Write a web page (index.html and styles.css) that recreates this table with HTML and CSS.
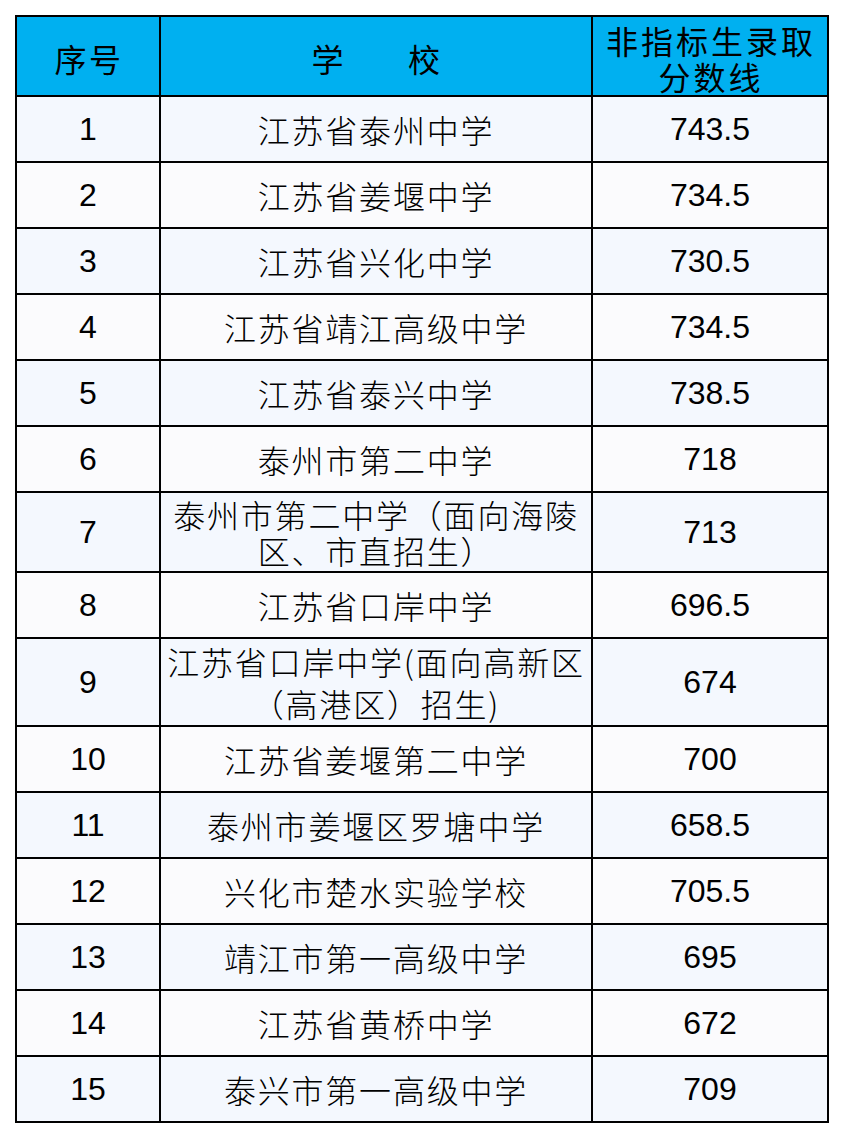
FILE: index.html
```html
<!DOCTYPE html>
<html lang="zh-CN">
<head>
<meta charset="utf-8">
<title>非指标生录取分数线</title>
<link rel="stylesheet" href="styles.css">
</head>
<body>
<table class="score-table">
  <colgroup>
    <col class="c-no">
    <col class="c-school">
    <col class="c-score">
  </colgroup>
  <thead>
    <tr class="head">
      <th class="cn">序号</th>
      <th class="cn">学<span class="gap"></span>校</th>
      <th class="cn two"><span class="ln">非指标生录取</span><span class="ln">分数线</span></th>
    </tr>
  </thead>
  <tbody>
    <tr class="odd"><td class="num">1</td><td class="cn">江苏省泰州中学</td><td class="num">743.5</td></tr>
    <tr class="even"><td class="num">2</td><td class="cn">江苏省姜堰中学</td><td class="num">734.5</td></tr>
    <tr class="odd"><td class="num">3</td><td class="cn">江苏省兴化中学</td><td class="num">730.5</td></tr>
    <tr class="even"><td class="num">4</td><td class="cn">江苏省靖江高级中学</td><td class="num">734.5</td></tr>
    <tr class="odd"><td class="num">5</td><td class="cn">江苏省泰兴中学</td><td class="num">738.5</td></tr>
    <tr class="even"><td class="num">6</td><td class="cn">泰州市第二中学</td><td class="num">718</td></tr>
    <tr class="odd r7"><td class="num">7</td><td class="cn two"><span class="ln">泰州市第二中学（面向海陵</span><span class="ln">区、市直招生）</span></td><td class="num">713</td></tr>
    <tr class="even"><td class="num">8</td><td class="cn">江苏省口岸中学</td><td class="num">696.5</td></tr>
    <tr class="odd r9"><td class="num">9</td><td class="cn two wide"><span class="ln">江苏省口岸中学(面向高新区</span><span class="ln">（高港区）招生)</span></td><td class="num">674</td></tr>
    <tr class="even"><td class="num">10</td><td class="cn">江苏省姜堰第二中学</td><td class="num">700</td></tr>
    <tr class="odd"><td class="num">11</td><td class="cn">泰州市姜堰区罗塘中学</td><td class="num">658.5</td></tr>
    <tr class="even"><td class="num">12</td><td class="cn">兴化市楚水实验学校</td><td class="num">705.5</td></tr>
    <tr class="odd"><td class="num">13</td><td class="cn">靖江市第一高级中学</td><td class="num">695</td></tr>
    <tr class="even"><td class="num">14</td><td class="cn">江苏省黄桥中学</td><td class="num">672</td></tr>
    <tr class="odd"><td class="num">15</td><td class="cn">泰兴市第一高级中学</td><td class="num">709</td></tr>
  </tbody>
</table>
</body>
</html>
```

FILE: styles.css
```css
html, body {
  margin: 0;
  padding: 0;
  background: #ffffff;
}

.score-table {
  margin: 15px 0 0 15px;
  border-collapse: separate;
  border-spacing: 0;
  border-top: 2px solid #000;
  border-left: 2px solid #000;
  table-layout: fixed;
  width: 814px;
}

.c-no { width: 144px; }
.c-school { width: 432px; }
.c-score { width: 236px; }

.score-table th,
.score-table td {
  box-sizing: border-box;
  border-right: 2px solid #000;
  border-bottom: 2px solid #000;
  padding: 0;
  text-align: center;
  vertical-align: middle;
  height: 66px;
  color: #000;
  white-space: nowrap;
}

.head th {
  height: 80px;
  background: #00b0f0;
  padding-top: 4px;
  font-weight: 400;
}

.head th.cn {
  letter-spacing: 2.5px;
  padding-left: 2px;
}

.head th.two {
  letter-spacing: 3px;
}

.gap {
  display: inline-block;
  width: 62px;
}

.odd td { background: #f4f8fe; }
.even td { background: #fbfbfd; }

.r7 td { height: 80px; }
.r9 td { height: 88px; }

.cn {
  font-family: "Noto Sans CJK SC", "Liberation Sans", sans-serif;
  font-size: 32px;
  font-weight: 300;
  letter-spacing: 1.8px;
  padding-left: 2px;
  line-height: 36px;
}

.ln {
  display: block;
  height: 36px;
  line-height: 36px;
}

.wide .ln {
  height: 42px;
  line-height: 42px;
}

.num {
  font-family: "Liberation Sans", Arial, sans-serif;
  font-size: 32px;
  font-weight: 400;
  letter-spacing: 0;
  line-height: 36px;
}
```
